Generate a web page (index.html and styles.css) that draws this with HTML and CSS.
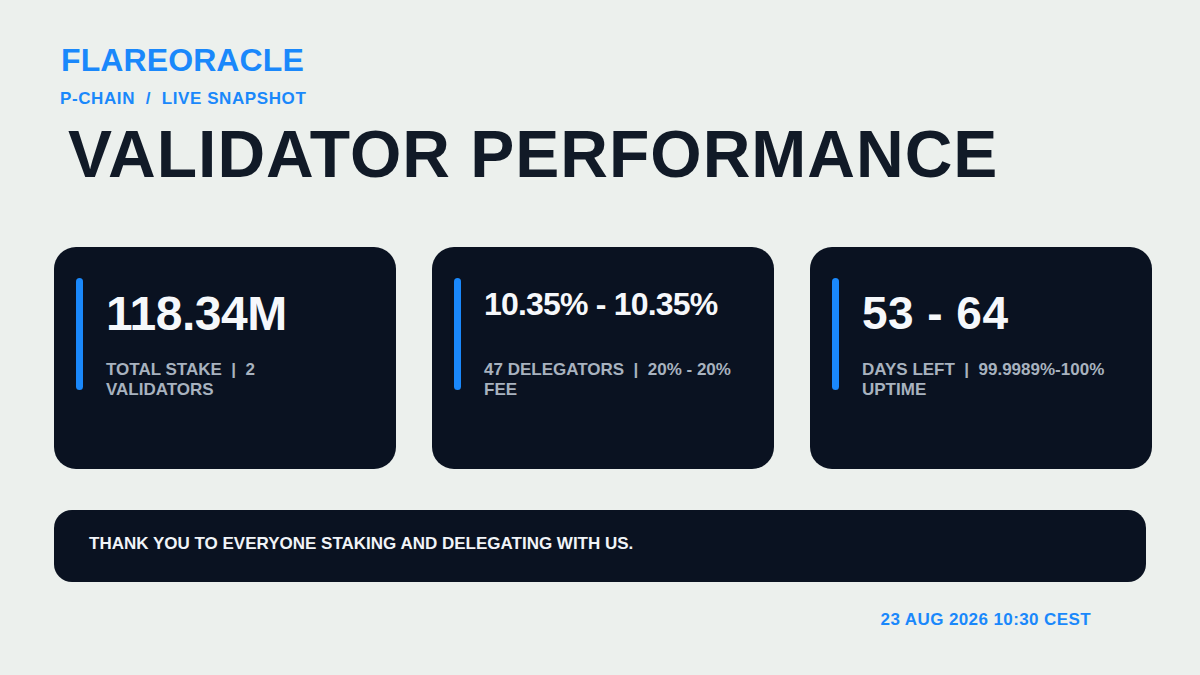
FILE: index.html
```html
<!DOCTYPE html>
<html lang="en">
<head>
<meta charset="utf-8">
<title>Validator Performance</title>
<link rel="stylesheet" href="styles.css">
</head>
<body>
<main class="page">
  <header class="header">
    <div class="brand">FLAREORACLE</div>
    <div class="crumb">P-CHAIN  /  LIVE SNAPSHOT</div>
    <h1 class="title">VALIDATOR PERFORMANCE</h1>
  </header>

  <section class="cards">
    <article class="card">
      <span class="bar"></span>
      <div class="card-body">
        <div class="value value-lg">118.34M</div>
        <div class="label">TOTAL STAKE  |  2 VALIDATORS</div>
      </div>
    </article>
    <article class="card">
      <span class="bar"></span>
      <div class="card-body">
        <div class="value value-sm">10.35% - 10.35%</div>
        <div class="label">47 DELEGATORS  |  20% - 20% FEE</div>
      </div>
    </article>
    <article class="card">
      <span class="bar"></span>
      <div class="card-body">
        <div class="value value-md">53 - 64</div>
        <div class="label">DAYS LEFT  |  99.9989%-100% UPTIME</div>
      </div>
    </article>
  </section>

  <section class="banner">
    <p class="banner-text">THANK YOU TO EVERYONE STAKING AND DELEGATING WITH US.</p>
  </section>

  <footer class="footer">
    <span class="stamp">23 AUG 2026 10:30 CEST</span>
  </footer>
</main>
</body>
</html>
```

FILE: styles.css
```css
* {
  box-sizing: border-box;
}

html, body {
  margin: 0;
  padding: 0;
}

body {
  width: 1200px;
  height: 675px;
  overflow: hidden;
  background: #ecf0ed;
  font-family: "Liberation Sans", Arial, sans-serif;
  font-weight: 700;
}

.page {
  padding: 44px 0 0 54px;
}

.header {
  display: flex;
  flex-direction: column;
  align-items: flex-start;
}

.brand {
  margin-left: 7px;
  font-size: 32px;
  line-height: 1;
  letter-spacing: 0.1px;
  color: #1a88fb;
}

.crumb {
  margin: 14px 0 0 6px;
  font-size: 17px;
  line-height: 1;
  letter-spacing: 0.6px;
  color: #1a88fb;
  white-space: pre;
}

.title {
  margin: 14px 0 0 14px;
  font-size: 66px;
  line-height: 1;
  letter-spacing: 1px;
  font-weight: 700;
  color: #111a27;
}

.cards {
  margin-top: 60px;
  display: grid;
  grid-template-columns: repeat(3, 342px);
  column-gap: 36px;
}

.card {
  height: 222px;
  border-radius: 22px;
  background: #0a1221;
  padding: 31px 34px 0 22px;
  display: flex;
  align-items: flex-start;
}

.bar {
  flex-shrink: 0;
  width: 7px;
  height: 112px;
  border-radius: 4px;
  background: #1a88fb;
}

.card-body {
  margin-left: 23px;
  padding-top: 8px;
  flex: 1;
  min-width: 0;
}

.value {
  height: 74px;
  line-height: normal;
  color: #f6f8fb;
}

.value-lg {
  font-size: 48px;
  letter-spacing: -0.01em;
}

.value-md {
  font-size: 46px;
  letter-spacing: 0.01em;
}

.value-sm {
  font-size: 32px;
  letter-spacing: -0.025em;
}

.label {
  font-size: 17px;
  line-height: 1.15;
  color: #a8b2bf;
  white-space: pre-wrap;
}

.banner {
  margin-top: 41px;
  width: 1092px;
  height: 72px;
  border-radius: 18px;
  background: #0a1221;
  padding: 24px 0 0 35px;
}

.banner-text {
  margin: 0;
  font-size: 17px;
  line-height: 1.15;
  color: #f1f4f8;
}

.footer {
  margin-top: 28px;
  width: 1092px;
  padding-right: 55px;
  display: flex;
  justify-content: flex-end;
}

.stamp {
  font-size: 17px;
  line-height: 1.15;
  letter-spacing: 0.4px;
  color: #1a88fb;
}
```
